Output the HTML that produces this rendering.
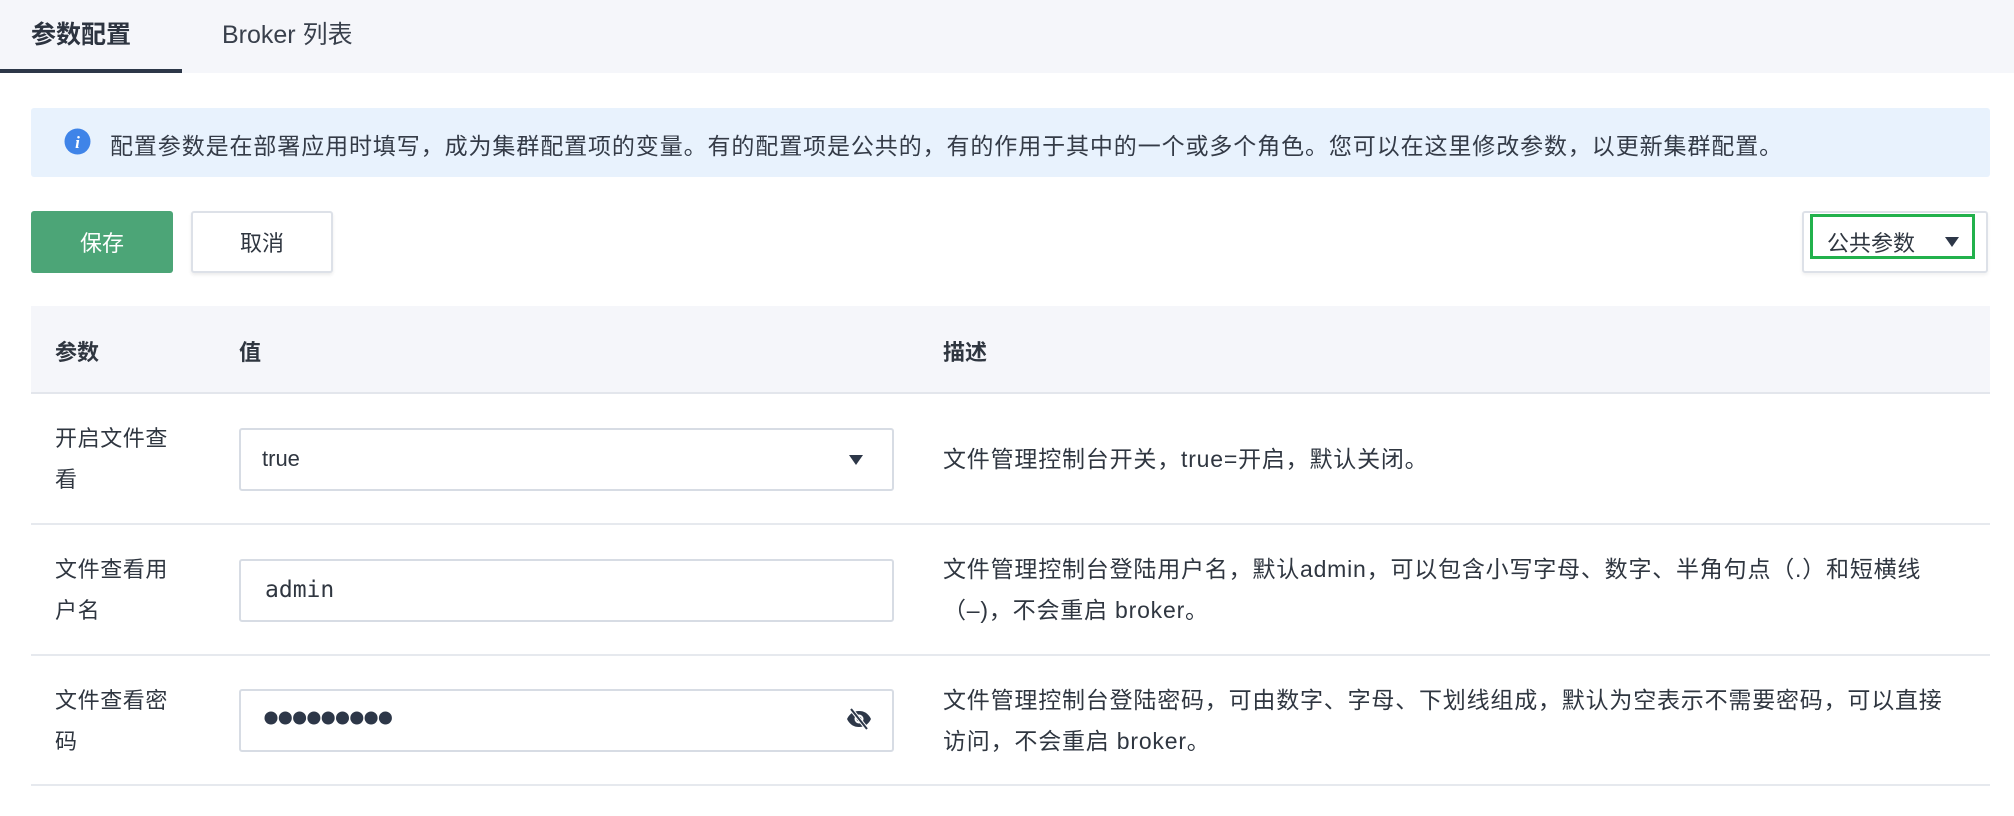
<!DOCTYPE html>
<html><head><meta charset="utf-8"><style>
*{margin:0;padding:0;box-sizing:border-box}
body{width:2014px;height:816px;background:#fff;font-family:"Liberation Sans","Noto Sans CJK SC",sans-serif;color:#2f3640;position:relative;overflow:hidden}
.a{position:absolute;white-space:nowrap}
.tabbar{left:0;top:0;width:2014px;height:73px;background:#f5f6fa}
.t{font-size:25px;top:15px}
.info{left:31px;top:108px;width:1959px;height:69px;background:#e8f2fd;border-radius:3px}
.btn{top:211px;height:62px;font-size:22px;display:flex;align-items:center;justify-content:center;border-radius:3px}
.th{left:31px;top:306px;width:1959px;height:88px;background:#f5f6fa;border-bottom:2px solid #e3e6ec}
.h{font-size:22px;top:335px;font-weight:bold;color:#2f3640}
.row{left:31px;width:1959px;border-bottom:2px solid #e6e9ee}
.lbl{font-size:22px;left:55px;width:124px;white-space:normal;line-height:41px;letter-spacing:0.6px}
.inp{left:239px;width:655px;height:63px;border:2px solid #d7dce4;border-radius:3px;background:#fff}
.d{font-size:23px;letter-spacing:0.8px;left:943px;width:1015px;white-space:normal;line-height:41px;color:#2f3640}
</style></head><body>
<div class="a tabbar"></div>
<div class="a t" style="left:31px;font-weight:bold;color:#2d3440">参数配置</div>
<div class="a t" style="left:222px;color:#39404c">Broker 列表</div>
<div class="a" style="left:0;top:69px;width:182px;height:4px;background:#2d3748"></div>

<div class="a info"></div>
<svg class="a" style="left:64px;top:128px" width="27" height="27" viewBox="0 0 27 27"><circle cx="13.5" cy="13.5" r="13" fill="#3f84e8"/><text x="13.5" y="20" font-size="17" font-style="italic" font-weight="bold" fill="#fff" text-anchor="middle" font-family="Liberation Serif,serif">i</text></svg>
<div class="a" style="left:110px;top:127px;font-size:23px;letter-spacing:0.9px;color:#343b47">配置参数是在部署应用时填写，成为集群配置项的变量。有的配置项是公共的，有的作用于其中的一个或多个角色。您可以在这里修改参数，以更新集群配置。</div>

<div class="a btn" style="left:31px;width:142px;background:#4ca577;color:#fff">保存</div>
<div class="a btn" style="left:191px;width:142px;background:#fff;border:2px solid #dde1e8;box-shadow:0 2px 3px rgba(0,0,0,.08);color:#2f3640">取消</div>

<div class="a" style="left:1802px;top:211px;width:186px;height:62px;border:2px solid #dde1e8;border-radius:3px;box-shadow:0 2px 3px rgba(0,0,0,.06)"></div>
<div class="a" style="left:1810px;top:214px;width:165px;height:45px;border:3px solid #22b14c"></div>
<div class="a" style="left:1827px;top:226px;font-size:22px;color:#2f3640">公共参数</div>
<svg class="a" style="left:1944px;top:236px" width="16" height="12"><path d="M1 1H15L8 11Z" fill="#2d3748"/></svg>

<div class="a th"></div>
<div class="a h" style="left:55px">参数</div>
<div class="a h" style="left:239px">值</div>
<div class="a h" style="left:943px">描述</div>

<div class="a row" style="top:394px;height:131px"></div>
<div class="a row" style="top:525px;height:131px"></div>
<div class="a row" style="top:656px;height:130px"></div>

<div class="a lbl" style="top:418px">开启文件查看</div>
<div class="a inp" style="top:428px"></div>
<div class="a" style="left:262px;top:446px;font-size:22px">true</div>
<svg class="a" style="left:848px;top:454px" width="16" height="12"><path d="M1 1H15L8 11Z" fill="#2d3748"/></svg>
<div class="a d" style="top:439px">文件管理控制台开关，true=开启，默认关闭。</div>

<div class="a lbl" style="top:549px">文件查看用户名</div>
<div class="a inp" style="top:559px"></div>
<div class="a" style="left:265px;top:577px;font-size:23px;font-family:'DejaVu Sans Mono','Liberation Mono',monospace">admin</div>
<div class="a d" style="top:549px">文件管理控制台登陆用户名，默认admin，可以包含小写字母、数字、半角句点（.）和短横线（–)，不会重启 broker。</div>

<div class="a lbl" style="top:680px">文件查看密码</div>
<div class="a inp" style="top:689px"></div>
<svg class="a" style="left:264px;top:710px" width="132" height="16"><g fill="#2d3748"><circle cx="7" cy="8" r="6.5"/><circle cx="21.3" cy="8" r="6.5"/><circle cx="35.6" cy="8" r="6.5"/><circle cx="49.9" cy="8" r="6.5"/><circle cx="64.2" cy="8" r="6.5"/><circle cx="78.5" cy="8" r="6.5"/><circle cx="92.8" cy="8" r="6.5"/><circle cx="107.1" cy="8" r="6.5"/><circle cx="121.4" cy="8" r="6.5"/></g></svg>
<svg class="a" style="left:845px;top:706px" width="28" height="26" viewBox="0 0 28 26"><path d="M2 13C5 7 9 5 14 5S23 7 26 13C23 19 19 21 14 21S5 19 2 13Z" fill="#2d3748"/><circle cx="14" cy="13" r="4.5" fill="#fff"/><circle cx="14" cy="13" r="2.5" fill="#2d3748"/><path d="M6 3L22 23" stroke="#fff" stroke-width="4"/><path d="M6 3L22 23" stroke="#2d3748" stroke-width="2"/></svg>
<div class="a d" style="top:680px">文件管理控制台登陆密码，可由数字、字母、下划线组成，默认为空表示不需要密码，可以直接访问，不会重启 broker。</div>
</body></html>
